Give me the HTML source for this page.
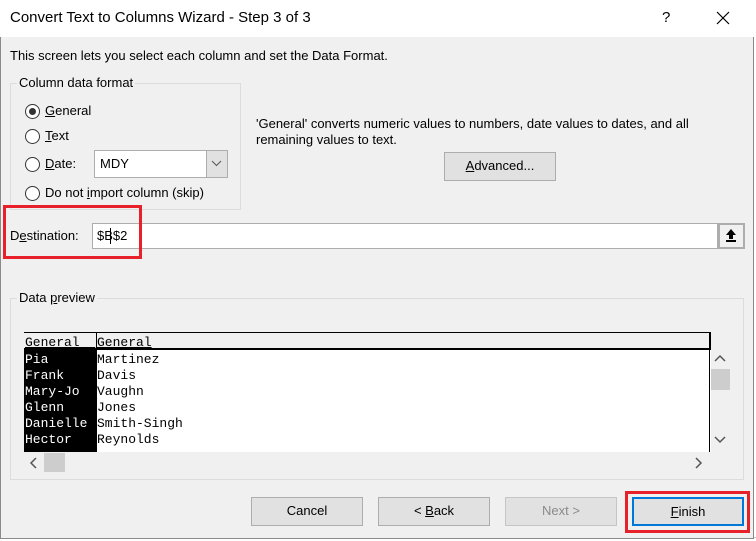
<!DOCTYPE html>
<html><head><style>
*{box-sizing:border-box;margin:0;padding:0}
body{width:756px;height:541px;position:relative;overflow:hidden;background:#fff;font-family:"Liberation Sans",sans-serif;font-size:13px;color:#000}
.a{position:absolute}
.dlg{left:0;top:0;width:754px;height:539px;background:#f0f0f0;border:1px solid #8a8a8a;border-top:none}
.title{left:0;top:0;width:754px;height:37px;background:#fff}
.grp{border:1px solid #dcdcdc}
.radio{width:15px;height:15px;border:1px solid #333;border-radius:50%;background:#fff}
.btn{background:#e1e1e1;border:1px solid #adadad;text-align:center;line-height:26px;font-size:13px}
.red{border:3px solid #e8202a}
.mono{font-family:"Liberation Mono",monospace;font-size:13px;line-height:16px}
u{text-decoration:underline}
</style></head><body>
<div class="a" style="left:0;top:537px;width:756px;height:4px;background:#fff;border-top:1px solid #ccc"></div>
<div class="a dlg"></div>
<div class="a title"></div>
<div class="a" style="left:10px;top:9px;font-size:15px">Convert Text to Columns Wizard - Step 3 of 3</div>
<div class="a" style="left:662px;top:9px;font-size:15px">?</div>
<svg class="a" style="left:716px;top:11px" width="14" height="14"><path d="M1 1L13 13M13 1L1 13" stroke="#000" stroke-width="1.2"/></svg>
<div class="a" style="left:10px;top:48px">This screen lets you select each column and set the Data Format.</div>
<div class="a grp" style="left:10px;top:83px;width:231px;height:127px"></div>
<div class="a" style="left:17px;top:75px;background:#f0f0f0;padding:0 2px">Column data format</div>
<div class="a radio" style="left:25px;top:104px"></div>
<div class="a" style="left:29px;top:108px;width:7px;height:7px;border-radius:50%;background:#333"></div>
<div class="a" style="left:45px;top:103px"><u>G</u>eneral</div>
<div class="a radio" style="left:25px;top:129px"></div>
<div class="a" style="left:45px;top:128px"><u>T</u>ext</div>
<div class="a radio" style="left:25px;top:157px"></div>
<div class="a" style="left:45px;top:156px"><u>D</u>ate:</div>
<div class="a" style="left:94px;top:150px;width:134px;height:28px;background:#fff;border:1px solid #adadad"></div>
<div class="a" style="left:100px;top:156px">MDY</div>
<div class="a" style="left:206px;top:151px;width:21px;height:26px;background:#e1e1e1;border-left:1px solid #adadad"></div>
<svg class="a" style="left:211px;top:160px" width="11" height="7"><path d="M1 1L5.5 5.5L10 1" stroke="#555" fill="none"/></svg>
<div class="a radio" style="left:25px;top:186px"></div>
<div class="a" style="left:45px;top:185px">Do not <u>i</u>mport column (skip)</div>
<div class="a" style="left:256px;top:116px;line-height:16px">'General' converts numeric values to numbers, date values to dates, and all<br>remaining values to text.</div>
<div class="a btn" style="left:444px;top:152px;width:112px;height:29px"><u>A</u>dvanced...</div>
<div class="a" style="left:10px;top:228px">D<u>e</u>stination:</div>
<div class="a" style="left:92px;top:223px;width:626px;height:26px;background:#fff;border:1px solid #adadad"></div>
<div class="a" style="left:97px;top:228px">$B$2</div>
<div class="a" style="left:110px;top:228px;width:1px;height:16px;background:#000"></div>
<div class="a" style="left:718px;top:223px;width:27px;height:26px;background:#f0f0f0;border:2px solid #adadad"></div>
<svg class="a" style="left:724px;top:228px" width="14" height="15"><path d="M7 1L2 7H5V11H9V7H12Z" fill="#000"/><rect x="2" y="12" width="10" height="2" fill="#000"/></svg>
<div class="a red" style="left:3px;top:205px;width:139px;height:54px"></div>
<div class="a grp" style="left:10px;top:298px;width:734px;height:182px"></div>
<div class="a" style="left:17px;top:290px;background:#f0f0f0;padding:0 2px">Data <u>p</u>review</div>
<div class="a" style="left:24px;top:332px;width:687px;height:120px;background:#fff"></div>
<div class="a" style="left:24px;top:332px;width:687px;height:18px;background:#f0f0f0;border-top:1px solid #000;border-right:1px solid #000;border-bottom:2px solid #000"></div>
<div class="a" style="left:96px;top:332px;width:1px;height:120px;background:#000"></div>
<div class="a" style="left:709px;top:332px;width:1px;height:120px;background:#000"></div>
<div class="a" style="left:24px;top:350px;width:72px;height:102px;background:#000"></div>
<div class="a mono" style="left:25px;top:335px;text-decoration:underline">General&nbsp;&nbsp;</div>
<div class="a mono" style="left:97px;top:335px;text-decoration:underline">General</div>
<div class="a mono" style="left:25px;top:352px;color:#fff">Pia<br>Frank<br>Mary-Jo<br>Glenn<br>Danielle<br>Hector</div>
<div class="a mono" style="left:97px;top:352px">Martinez<br>Davis<br>Vaughn<br>Jones<br>Smith-Singh<br>Reynolds</div>
<svg class="a" style="left:714px;top:354px" width="12" height="8"><path d="M1 7L6 2L11 7" stroke="#555" stroke-width="1.5" fill="none"/></svg>
<div class="a" style="left:711px;top:369px;width:19px;height:21px;background:#cdcdcd"></div>
<svg class="a" style="left:714px;top:436px" width="12" height="8"><path d="M1 1L6 6L11 1" stroke="#555" stroke-width="1.5" fill="none"/></svg>
<svg class="a" style="left:29px;top:457px" width="8" height="12"><path d="M7 1L2 6L7 11" stroke="#555" stroke-width="1.5" fill="none"/></svg>
<div class="a" style="left:44px;top:453px;width:21px;height:19px;background:#cdcdcd"></div>
<svg class="a" style="left:695px;top:457px" width="8" height="12"><path d="M1 1L6 6L1 11" stroke="#555" stroke-width="1.5" fill="none"/></svg>
<div class="a btn" style="left:251px;top:497px;width:112px;height:29px">Cancel</div>
<div class="a btn" style="left:378px;top:497px;width:112px;height:29px">&lt; <u>B</u>ack</div>
<div class="a btn" style="left:505px;top:497px;width:112px;height:29px;color:#8a8a8a;border-color:#c5c5c5">Next &gt;</div>
<div class="a btn" style="left:632px;top:497px;width:112px;height:29px;border:2px solid #0078d7;line-height:25px"><u>F</u>inish</div>
<div class="a red" style="left:625px;top:491px;width:125px;height:42px"></div>
</body></html>
